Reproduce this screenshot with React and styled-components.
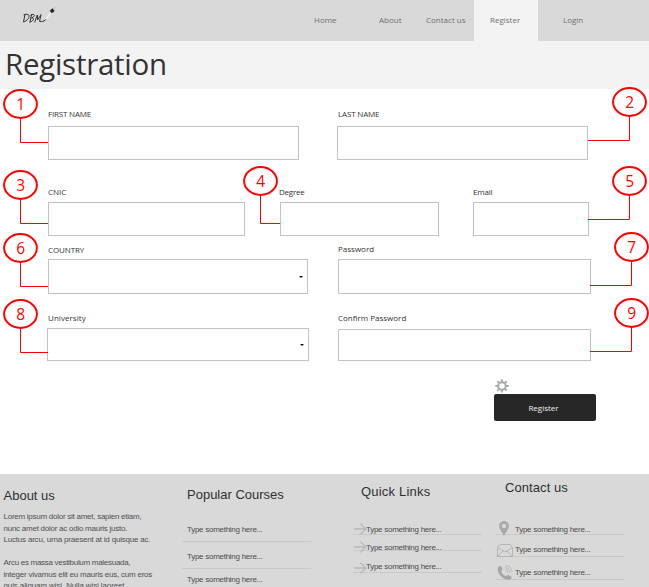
import React from "react";
import styled, { createGlobalStyle } from "styled-components";

const GlobalStyle = createGlobalStyle`
  * { box-sizing: border-box; }
  body { margin: 0; background: #fff; overflow: hidden; }
`;

const Page = styled.div`
  width: 649px;
  height: 587px;
  overflow: hidden;
  display: flex;
  flex-direction: column;
  background: #fff;
  font-family: "Open Sans", sans-serif;
`;

const Header = styled.header`
  height: 41px;
  flex: none;
  display: flex;
  background: #d9d9d9;
`;

const LogoBox = styled.div`
  width: 294px;
  padding: 6px 0 0 21px;
`;

const NavItem = styled.a`
  width: ${(p) => p.$w}px;
  padding-left: ${(p) => p.$pad}px;
  line-height: 40px;
  font-size: 8px;
  white-space: nowrap;
  color: #707070;
  background: ${(p) => (p.$active ? "#f3f3f3" : "transparent")};
`;

const TitleBar = styled.div`
  height: 48px;
  flex: none;
  padding-left: 5px;
  background: #f3f3f3;
`;

const Title = styled.h1`
  margin: 0;
  font-size: 29.5px;
  font-weight: 400;
  line-height: 46px;
  letter-spacing: -0.28px;
  color: #333;
`;

const FormRow = styled.div`
  height: ${(p) => p.$h}px;
  flex: none;
  display: flex;
  align-items: flex-end;
`;

const FieldBox = styled.div`
  position: relative;
  margin-left: ${(p) => p.$gap}px;
  width: ${(p) => p.$w}px;
`;

const Label = styled.label`
  display: block;
  height: 12px;
  line-height: 12px;
  margin-bottom: ${(p) => p.$mb}px;
  margin-left: ${(p) => p.$shift || 0}px;
  font-size: 8px;
  letter-spacing: ${(p) => p.$ls}px;
  white-space: nowrap;
  color: #333;
`;

const Control = styled.div`
  height: ${(p) => p.$h}px;
  border: 1px solid #c2c2c2;
  background: #fff;
  display: flex;
  align-items: center;
  justify-content: flex-end;
  padding-right: 4px;
`;

const Caret = styled.span`
  width: 4px;
  height: 2px;
  background: #111;
  clip-path: polygon(0 0, 100% 0, 75% 100%, 25% 100%);
`;

const CalloutSvg = styled.svg`
  position: absolute;
  left: ${(p) => p.$x}px;
  top: ${(p) => p.$y}px;
  overflow: visible;
  pointer-events: none;
`;

/* Numbered ellipse with an elbow line of signed length `reach`. */
function Callout({ n, x, y, reach, drop = 53.5 }) {
  return (
    <CalloutSvg $x={x} $y={y} width="35" height="55">
      <ellipse cx="17.5" cy="15" rx="16.4" ry="13.9" fill="#fff" stroke="#ff0000" strokeWidth="2" />
      <path d={`M17.5 29V${drop}H${17.5 + reach}`} fill="none" stroke="#f80000" strokeWidth="1" />
      <text x="17.7" y="21" textAnchor="middle" fontFamily="Open Sans" fontSize="15.5" fill="#ff0000">
        {n}
      </text>
    </CalloutSvg>
  );
}

function Field({ label, gap, w, h = 34, mb, shift, ls = 0, select, callout }) {
  return (
    <FieldBox $gap={gap} $w={w}>
      <Label $mb={mb} $shift={shift} $ls={ls}>{label}</Label>
      <Control $h={h}>{select && <Caret />}</Control>
      {callout && <Callout {...callout} />}
    </FieldBox>
  );
}

const Actions = styled.div`
  flex: none;
  height: 113px;
  padding: 18px 0 0 494px;
  display: flex;
  flex-direction: column;
`;

const GearSvg = styled.svg`
  display: block;
  margin: 0 0 1px 1px;
`;

const Submit = styled.button`
  width: 102px;
  height: 27px;
  padding: 0 3px 0 0;
  border: 0;
  border-radius: 2px;
  background: #272727;
  color: #f2f2f2;
  font: 8px/26px "Open Sans", sans-serif;
`;

const Footer = styled.footer`
  flex: 1;
  display: flex;
  background: #d9d9d9;
  font-family: "Liberation Sans", Arial, sans-serif;
`;

const Column = styled.section`
  width: ${(p) => p.$w}px;
  padding: ${(p) => p.$top}px 0 0 ${(p) => p.$left}px;
  flex: none;
`;

const Heading = styled.h2`
  margin: 0 0 ${(p) => p.$mb}px ${(p) => p.$indent || 0}px;
  font-size: 13px;
  line-height: 16px;
  font-weight: 400;
  letter-spacing: ${(p) => p.$ls || 0}px;
  white-space: nowrap;
  color: #303030;
`;

const Line = styled.div`
  height: 11.5px;
  line-height: 11.5px;
  font-size: 8px;
  letter-spacing: ${(p) => p.$ls}px;
  white-space: nowrap;
  color: #505050;
`;

const Item = styled.div`
  width: 129px;
  height: ${(p) => p.$h}px;
  padding: ${(p) => p.$top}px 0 0 ${(p) => p.$pad}px;
  border-bottom: 1px solid #c9c9c9;
  position: relative;
  font-size: 8px;
  line-height: 10px;
  letter-spacing: -0.27px;
  white-space: nowrap;
  color: #4c4c4c;
`;

const ItemIcon = styled.svg`
  position: absolute;
  left: ${(p) => p.$x}px;
  top: ${(p) => p.$y}px;
`;

const Arrow = ({ y }) => (
  <ItemIcon $x={1} $y={y} width="13" height="12" fill="none" stroke="#b7b7b7" strokeWidth="1.3">
    <path d="M0 6H12M6.3 .6L12 6L6.3 11.4" />
  </ItemIcon>
);

const Logo = () => (
  <svg width="36" height="18" fill="none" stroke="#333" strokeWidth="1" strokeLinecap="round" strokeLinejoin="round">
    <path d="M4 8.5L2.5 16C6 15 8.5 12 8 9.5C7.5 8 5 8 3 8.8" />
    <path d="M10.5 8.5L9 16M10 9C14.5 7 14.5 10.5 10.5 12C14 11.5 12.5 15.5 9 16" />
    <path d="M13.8 16L16.3 9L16.6 14L20 8.5L18.6 15.5C21 15.8 22.5 15.5 24 14.3" />
    <path d="M24.5 13.5L29.5 7.5" stroke="#f0f0e8" strokeWidth="1.6" />
    <path d="M23 14.9L24.8 13.6" strokeWidth=".8" />
    <path d="M29.8 6L32.6 3.6" stroke="#262626" strokeWidth="3.4" strokeLinecap="butt" />
    <path d="M33.2 2.5L34.2 1.5" stroke="#aaa" />
  </svg>
);

const Gear = () => (
  <GearSvg width="14" height="14" viewBox="-7 -7 14 14" fill="none" stroke="#a4adab">
    <circle r="3.6" strokeWidth="1.7" />
    {[0, 45, 90, 135, 180, 225, 270, 315].map((a) => (
      <path key={a} d="M-1.5 -4L-.4 -7H.4L1.5 -4Z" fill="#a4adab" stroke="none" transform={`rotate(${a})`} />
    ))}
  </GearSvg>
);

const TEXT = "Type something here...";

export default function App() {
  return (
    <Page>
      <GlobalStyle />
      <Header>
        <LogoBox><Logo /></LogoBox>
        <NavItem $w={66} $pad={20}>Home</NavItem>
        <NavItem $w={57} $pad={19}>About</NavItem>
        <NavItem $w={57} $pad={9}>Contact us</NavItem>
        <NavItem $w={64} $pad={16} $active>Register</NavItem>
        <NavItem $w={70} $pad={25}>Login</NavItem>
      </Header>
      <TitleBar><Title>Registration</Title></TitleBar>

      <FormRow $h={71}>
        <Field label="FIRST NAME" gap={48} w={251} mb={6} ls={-0.18} callout={{ n: 1, x: -45, y: -19, reach: 27.5 }} />
        <Field label="LAST NAME" gap={38} w={251} mb={6} ls={-0.16} shift={1} callout={{ n: 2, x: 275, y: -21, reach: -41.5 }} />
      </FormRow>
      <FormRow $h={76}>
        <Field label="CNIC" gap={48} w={197} mb={4} callout={{ n: 3, x: -45, y: -16, reach: 27.5 }} />
        <Field label="Degree" gap={35} w={159} mb={4} ls={-0.25} shift={-1} callout={{ n: 4, x: -37, y: -20, reach: 19.5, drop: 57.5 }} />
        <Field label="Email" gap={34} w={116} mb={4} ls={-0.2} callout={{ n: 5, x: 139, y: -20, reach: -41.5 }} />
      </FormRow>
      <FormRow $h={58}>
        <Field label="COUNTRY" gap={48} w={260} h={35} mb={3} ls={-0.1} select callout={{ n: 6, x: -45, y: -11, reach: 27.5 }} />
        <Field label="Password" gap={30} w={253} h={35} mb={4} callout={{ n: 7, x: 276, y: -11, reach: -41.5 }} />
      </FormRow>
      <FormRow $h={67}>
        <Field label="University" gap={47} w={262} h={33} mb={4} ls={0.05} shift={1} select callout={{ n: 8, x: -44, y: -13, reach: 27.5 }} />
        <Field label="Confirm Password" gap={29} w={253} h={32} mb={5} callout={{ n: 9, x: 276, y: -14, reach: -41.5 }} />
      </FormRow>

      <Actions>
        <Gear />
        <Submit>Register</Submit>
      </Actions>

      <Footer>
        <Column $w={182} $top={14} $left={3.5}>
          <Heading $mb={7}>About us</Heading>
          <Line $ls={-0.26}>Lorem ipsum dolor sit amet, sapien etiam,</Line>
          <Line $ls={-0.25}>nunc amet dolor ac odio mauris justo.</Line>
          <Line $ls={-0.2}>Luctus arcu, urna praesent at id quisque ac.</Line>
          <Line />
          <Line $ls={-0.29}>Arcu es massa vestibulum malesuada,</Line>
          <Line $ls={-0.22}>integer vivamus elit eu mauris eus, cum eros</Line>
          <Line $ls={-0.12}>quis aliquam wisi. Nulla wisi laoreet</Line>
        </Column>
        <Column $w={171} $top={13} $left={0}>
          <Heading $mb={14} $indent={5}>Popular Courses</Heading>
          <Item $h={25} $top={8} $pad={5}>{TEXT}</Item>
          <Item $h={27} $top={10} $pad={5}>{TEXT}</Item>
          <Item $h={27} $top={6} $pad={5}>{TEXT}</Item>
        </Column>
        <Column $w={143} $top={10} $left={0}>
          <Heading $mb={21} $indent={8} $ls={0.2}>Quick Links</Heading>
          <Item $h={14} $top={4} $pad={13}><Arrow y={2} />{TEXT}</Item>
          <Item $h={16} $top={8} $pad={13}><Arrow y={6} />{TEXT}</Item>
          <Item $h={22} $top={11} $pad={13}><Arrow y={11} />{TEXT}</Item>
        </Column>
        <Column $w={153} $top={6} $left={0}>
          <Heading $mb={25} $indent={9} $ls={0.08}>Contact us</Heading>
          <Item $h={14} $top={4} $pad={19}>
            <ItemIcon $x={3} $y={0} width="10" height="15" fill="#a9a9a9">
              <path fillRule="evenodd" d="M5 0A5 5 0 0 0 0 5C0 8 3 10.5 5 15C7 10.5 10 8 10 5A5 5 0 0 0 5 0M5 2.7A2.2 2.2 0 1 1 5 7.1A2.2 2.2 0 1 1 5 2.7" />
            </ItemIcon>
            {TEXT}
          </Item>
          <Item $h={22} $top={10} $pad={19}>
            <ItemIcon $x={1} $y={9} width="16" height="13" fill="none" stroke="#b5b5b5">
              <path d="M.5 3.5V12.5H15.5V3.5L13 .5H3ZM.5 3.5L8 8L15.5 3.5M.5 12.5L6 7M15.5 12.5L10 7" />
            </ItemIcon>
            {TEXT}
          </Item>
          <Item $h={23} $top={11} $pad={19}>
            <ItemIcon $x={1} $y={8} width="16" height="16" fill="#a6a6a6">
              <path d="M1.2 2.2C2.5 .5 4 .8 4.6 2L5.3 4.2C5.6 5.2 4.3 5.5 4.2 6.3C4.8 8.6 6.8 10.6 9 11.2C10 11.3 10.2 9.8 11.3 10.1L13.8 11.3C15 12 14.8 13.2 13.5 14.3C8.5 17 -1.5 9 1.2 2.2Z" />
              <path d="M8 4.5Q10.7 5 11 8M8.3 2.5Q12.6 3 13 7.5M8.5 .6Q14.5 1 15 7" fill="none" stroke="#bababa" />
            </ItemIcon>
            {TEXT}
          </Item>
        </Column>
      </Footer>
    </Page>
  );
}
